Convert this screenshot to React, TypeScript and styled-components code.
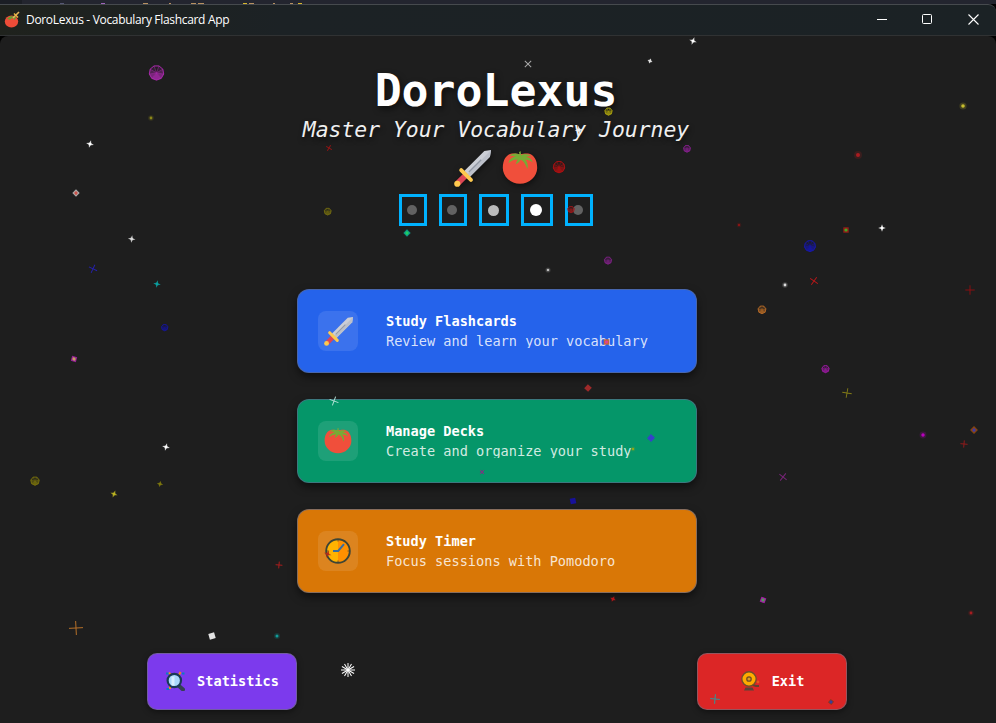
import React from "react";
import styled, { createGlobalStyle } from "styled-components";

const GlobalStyle = createGlobalStyle`
  * { box-sizing: border-box; }
  body { margin: 0; background: #000; overflow: hidden; }
`;

const mono = `"DejaVu Sans Mono", "Liberation Mono", monospace`;

const Desktop = styled.div`
  position: relative;
  width: 996px;
  height: 723px;
  overflow: hidden;
  background: #000;
  display: flex;
  flex-direction: column;
  font-family: ${mono};
`;

const Backdrop = styled.div`
  height: 4px;
  flex: none;
  background: linear-gradient(90deg, #1b1e25 22px, #23252f 22px);
  svg { display: block; }
`;

const TitleBar = styled.header`
  height: 32px;
  flex: none;
  display: flex;
  align-items: center;
  border-top: 1px solid #464a4e;
  border-bottom: 1px solid #303233;
  border-radius: 0 8px 0 0;
  background: linear-gradient(90deg, #1f221d 0, #1c2225 280px, #1b2225 100%);
`;

const AppIcon = styled.div`
  width: 26px;
  height: 30px;
  padding: 6px 0 0 4px;
`;

const WindowTitle = styled.div`
  flex: 1;
  color: #fff;
  font: 12px/30px "Open Sans", "Noto Sans", sans-serif;
  letter-spacing: -0.32px;
`;

const WindowButton = styled.div`
  width: 45.5px;
  height: 30px;
  padding-bottom: 2px;
  display: flex;
  align-items: center;
  justify-content: center;
  &:last-child { width: 46px; }
`;

const Client = styled.main`
  flex: 1;
  display: flex;
  flex-direction: column;
  align-items: center;
  padding-right: 4px;
  background: #1e1e1e;
  border-radius: 8px 8px 0 0;
`;

const Title = styled.h1`
  margin: 30px 0 0;
  height: 48px;
  color: #fff;
  font-size: 44.8px;
  line-height: 50px;
  font-weight: 700;
  text-shadow: 2px 3px 6px rgba(0, 0, 0, 0.55);
`;

const Tagline = styled.p`
  margin: 0;
  height: 32px;
  color: #f0f0f0;
  font-size: 21.4px;
  line-height: 32px;
  font-style: italic;
  text-shadow: 1px 3px 5px rgba(0, 0, 0, 0.55);
`;

const Emblems = styled.div`
  display: flex;
  gap: 11px;
  height: 48px;
  padding-top: 4px;
  filter: drop-shadow(1px 2px 3px rgba(0, 0, 0, 0.5));
`;

const Pager = styled.div`
  display: flex;
  gap: 12px;
  height: 32px;
`;

const PageBox = styled.div<{ $w: number; $inset: number }>`
  width: ${(p) => p.$w}px;
  height: 32px;
  border: 3px solid #00b2ff;
  display: flex;
  align-items: center;
  justify-content: center;
  padding-right: ${(p) => p.$inset}px;
`;

const PageDot = styled.i<{ $size: number; $color: string }>`
  width: ${(p) => p.$size}px;
  height: ${(p) => p.$size}px;
  flex: none;
  border-radius: 50%;
  background: ${(p) => p.$color};
`;

const Menu = styled.nav`
  width: 400px;
  margin: 63px 0 0 2px;
  display: flex;
  flex-direction: column;
  gap: 26px;
`;

const Card = styled.div<{ $color: string }>`
  height: 84px;
  display: flex;
  align-items: center;
  padding: 0 20px;
  border: 1px solid rgba(90, 105, 140, 0.65);
  border-radius: 12px;
  background: ${(p) => p.$color};
  box-shadow: 0 4px 9px rgba(0, 0, 0, 0.5);
`;

const Tile = styled.div`
  width: 40px;
  height: 40px;
  margin-right: 28px;
  border-radius: 8px;
  display: flex;
  align-items: center;
  justify-content: center;
  background: rgba(255, 255, 255, 0.1);
`;

const CardBody = styled.div`
  height: 40px;
`;

const CardTitle = styled.div`
  height: 20px;
  color: #fff;
  font-size: 13.6px;
  line-height: 20px;
  font-weight: 700;
`;

const CardText = styled.div`
  height: 17px;
  overflow: hidden;
  color: rgba(255, 255, 255, 0.83);
  font-size: 13.6px;
  line-height: 20px;
  white-space: nowrap;
`;

const Footer = styled.footer`
  width: 700px;
  margin: 60px 0 0 2px;
  display: flex;
  justify-content: space-between;
`;

const FooterButton = styled.div<{ $color: string }>`
  width: 150px;
  height: 57px;
  padding-bottom: 2px;
  display: flex;
  align-items: center;
  justify-content: center;
  gap: 12px;
  color: #fff;
  font-size: 13.6px;
  font-weight: 700;
  border: 1px solid rgba(110, 110, 125, 0.65);
  border-radius: 10px;
  background: ${(p) => p.$color};
  box-shadow: 0 2px 6px rgba(0, 0, 0, 0.45);
`;

const ParticleLayer = styled.svg`
  position: absolute;
  inset: 0;
  pointer-events: none;
`;

const Sword = ({ size }: { size: number }) => (
  <svg width={size} height={size} viewBox="0 0 36 36">
    <path d="M36 0 35 6.5 15.5 26 10 20.5 29.5 1z" fill="#cbced6" />
    <path d="M36 0 35 6.5 15.5 26 13 23.5z" fill="#bcc0ca" />
    <path d="M14.5 21.5 26.5 9.5" stroke="#9299a6" strokeWidth="1.3" />
    <path d="M9 23 13 27 6 34 2 30z" fill="#dd4655" />
    <path d="m7 19.5 9.5 9.5" stroke="#fdc94f" strokeWidth="3.8" strokeLinecap="round" />
    <circle cx="3.2" cy="32.8" r="3" fill="#ffc94e" />
  </svg>
);

const Tomato = ({ size }: { size: number }) => (
  <svg width={size} height={size} viewBox="0 0 36 36">
    <path d="M10 3.6C4 4.500 .7 10.500 .8 18 .9 26.500 8.500 33.800 18 33.800S35.100 26.500 35.200 18C35.300 10.500 32 4.500 26 3.600c-3-.4-5 .4-8 .4s-5-.8-8-.4z" fill="#f04f3b" />
    <path d="M18.500 1 17 2.200l.6 2.300C14 2.800 9.500 3.400 7.500 6c2.500-.5 4.500-.2 6 .6-3.500.8-6.500 3-7 6.700 2.500-2.600 5.500-3.900 9-3.800l-1.800 4.700c2.800-1.200 4.200-2.600 4.800-4.400 3.500 1.200 4.800 4.700 7 9.200.9-4-.2-7-2.200-9.300 3-.2 5.200.6 7.300 2.900-.3-3.600-3.300-5.400-6.500-5.700 1.500-.8 3.200-.9 5.200-.2-2.600-3-7-3.200-10.200-1.700z" fill="#77ab35" />
  </svg>
);

const Clock = () => (
  <svg width="26" height="26" viewBox="0 0 26 26">
    <circle cx="13" cy="13" r="11.800" fill="#ffb300" />
    <path d="M13 1.200a11.800 11.800 0 0 1 0 23.600z" fill="#ff9000" />
    <circle cx="13" cy="13" r="11.800" fill="none" stroke="#3d4536" strokeWidth="1.900" />
    <path d="M8 13h5.200L19 6.200" fill="none" stroke="#386da0" strokeWidth="2" />
    <path d="M13 2v1.500M13 22.500V24M2 13h1.500M22.500 13H24" stroke="#705529" />
  </svg>
);

const Magnifier = () => (
  <svg width="20" height="20" viewBox="0 0 20 20">
    <path d="M1 2.500h3M1.500 18h3M17 2.500h2.500" stroke="#087fc1" strokeWidth="2.200" />
    <path d="M4 1.500 6 4M15.500 1 14 4M5 18v-3" stroke="#f28a1d" strokeWidth="2" />
    <path d="m14 15 4 3.500" stroke="#344052" strokeWidth="4" strokeLinecap="round" />
    <circle cx="9.300" cy="9.500" r="6.700" fill="#a9d8fb" stroke="#193a56" strokeWidth="2.200" />
    <path d="M6.500 5.500h3v9h-3z" fill="#d7efff" />
  </svg>
);

const Bell = () => (
  <svg width="20" height="20" viewBox="0 0 20 20">
    <path d="M6 14h7l3 1h3" fill="none" stroke="#64402c" strokeWidth="2" />
    <path d="M5.500 16.500h7l1.500 3H4z" fill="#594438" />
    <circle cx="9" cy="8" r="7.200" fill="#ffab00" stroke="#71502b" strokeWidth="1.400" />
    <circle cx="9" cy="8" r="2.200" fill="#d99c25" stroke="#6e4b27" strokeWidth="1.300" />
    <circle cx="18" cy="11" r="1.400" fill="#e75520" />
  </svg>
);

type Kind = "gem" | "star" | "cross" | "dot" | "square" | "burst";
type Particle = [Kind, number, number, number, string, number?, string?];

const particles: Particle[] = [
  ["gem", 156.5, 72.8, 7.3, "#b52bb8"],
  ["dot", 151, 118, 1.4, "#8b8618"],
  ["star", 90, 144, 4, "#fff", 15],
  ["square", 76, 193, 2.6, "#aaa", 45, "#cb5149"],
  ["star", 131.700, 239, 3.800, "#ddd", 8],
  ["cross", 93, 268.800, 4.500, "#2521ad", 25],
  ["star", 157, 284, 3.800, "#0ca0a0", 10],
  ["gem", 164.700, 327.500, 3.300, "#16169b"],
  ["square", 74, 359, 2.600, "#962296", 15, "#c5a060"],
  ["star", 166, 447, 4, "#fff", 15],
  ["gem", 35, 481, 4.300, "#7e760c"],
  ["star", 114, 494, 3.800, "#bcb522", 20],
  ["star", 160, 484, 3.200, "#80790d", 15],
  ["cross", 76, 628, 7, "#b87128", -3],
  ["square", 212, 636, 3, "#e3e3e3", -16],
  ["dot", 277, 636, 1.500, "#109c99"],
  ["cross", 279, 565, 3.400, "#ac1c1c", 5],
  ["burst", 348, 670, 7, "#fff"],
  ["cross", 329, 148, 3.200, "#981414", 30],
  ["gem", 327.700, 211.500, 3.500, "#777010"],
  ["square", 407, 233, 2.600, "#0d9588", 45, "#20d05f"],
  ["cross", 528, 64, 4.500, "#aaa", 45],
  ["star", 693, 41, 4, "#fff", 20],
  ["star", 650, 61, 2.600, "#eee", 20],
  ["gem", 608.500, 111.500, 3.700, "#b4aa0d"],
  ["gem", 687, 148.700, 3.500, "#882090"],
  ["star", 579, 130, 4.500, "#eee", -10],
  ["gem", 559, 167, 5.800, "#b90f11"],
  ["gem", 571, 209.500, 3.300, "#9c181b"],
  ["gem", 608, 260.500, 3.700, "#812288"],
  ["dot", 548, 270, 1.300, "#bbb"],
  ["dot", 963, 106, 1.800, "#c6bd2e"],
  ["dot", 858, 155, 2, "#a91c20"],
  ["dot", 739, 225, 1.200, "#8b1515"],
  ["square", 846, 230, 2.700, "#941d16", 0, "#42a923"],
  ["star", 882, 228, 3.800, "#fff", 0],
  ["gem", 810, 246, 5.600, "#1717b4"],
  ["dot", 785, 285, 1.400, "#ddd"],
  ["cross", 814, 281, 4.700, "#b81719", 35],
  ["gem", 762, 309.700, 4, "#bd6e27"],
  ["cross", 970, 290, 4.700, "#8e1012", 0],
  ["gem", 825.500, 369, 3.700, "#a01aa7"],
  ["cross", 847, 393, 4.800, "#827b17", 10],
  ["dot", 923, 435, 1.700, "#b900bd"],
  ["square", 974, 430, 2.800, "#87440e", 45, "#3d3aa9"],
  ["cross", 964, 444, 3.600, "#92191a", 5],
  ["cross", 783, 477, 4.600, "#792479", 38],
  ["square", 606.500, 342, 2.700, "#c5663a", 0, "#de4193"],
  ["square", 588, 388, 2.700, "#9d2a2a", 43],
  ["cross", 334, 401, 4.700, "#b9e4d9", 20],
  ["square", 651, 438, 2.800, "#3742c9", 43],
  ["dot", 633, 449, 1.200, "#94a516"],
  ["cross", 482, 472, 2.700, "#882c84", 45],
  ["square", 573, 501, 2.800, "#17119a", -12],
  ["star", 327.700, 554, 4, "#b22c1a", 20],
  ["star", 613, 599, 3, "#ba1617", 25],
  ["square", 763, 600, 2.600, "#a51ba5", 20, "#509d5a"],
  ["dot", 971, 613, 1.400, "#a61c20"],
  ["cross", 715, 699, 4.800, "#2b999b", 5],
  ["square", 831, 702, 2.200, "#943515", 40, "#3d3d9b"],
];

const polygon = (r: number) => {
  const sides = r > 5 ? 9 : 7;
  return Array.from({ length: sides }, (_, i) => {
    const a = (i * Math.PI * 2) / sides + Math.PI / 2;
    return [Math.cos(a) * r, Math.sin(a) * r];
  });
};

const Gem = ({ r, color }: { r: number; color: string }) => {
  const points = polygon(r);
  return (
    <>
      {points.map(([x, y], i) => {
        const [nx, ny] = points[(i + 1) % points.length];
        const depth = (y + ny) / (2 * r);
        return (
          <path
            key={i}
            d={`M0 0L${x} ${y}L${nx} ${ny}z`}
            fill={color}
            fillOpacity={0.42 + depth * 0.4}
            stroke={color}
            strokeWidth={0.4}
            strokeOpacity={0.6}
          />
        );
      })}
      <polygon points={points.join(" ")} fill="none" stroke={color} strokeWidth={0.9} strokeOpacity={0.9} />
    </>
  );
};

const ParticleShape = ({ p: [kind, x, y, r, color, rot = 0, core] }: { p: Particle }) => (
  <g transform={`translate(${x} ${y}) rotate(${rot})`}>
    {kind === "gem" && <Gem r={r} color={color} />}
    {kind === "star" && (
      <>
        <path d={`M0 ${-r} L1 -1 L${r} 0 L1 1 L0 ${r} L-1 1 L${-r} 0 L-1 -1z`} fill={color} fillOpacity={0.85} />
        <circle r={r * 0.32} fill={color} />
      </>
    )}
    {kind === "cross" && <path d={`M${-r} 0H${r}M0 ${-r}V${r}`} stroke={color} strokeWidth={0.95} />}
    {kind === "dot" && (
      <>
        <circle r={r * 2} fill={color} fillOpacity={0.2} />
        <circle r={r} fill={color} />
      </>
    )}
    {kind === "square" && (
      <>
        <rect x={-r} y={-r} width={r * 2} height={r * 2} fill={color} />
        {core && <circle r={1.6} fill={core} />}
      </>
    )}
    {kind === "burst" &&
      [0, 30, 60, 90, 120, 150].map((a) => (
        <path key={a} d={`M${-r} 0H${r}`} stroke={color} strokeWidth={1} transform={`rotate(${a})`} />
      ))}
  </g>
);

const pages = [
  { width: 28, inset: 2, dot: 10, color: "#626262" },
  { width: 28, inset: 2, dot: 10, color: "#626262" },
  { width: 30, inset: 1, dot: 11, color: "#bbb" },
  { width: 32, inset: 2, dot: 12, color: "#fff" },
  { width: 28, inset: 2, dot: 10, color: "#626262" },
];

const cards = [
  { title: "Study Flashcards", text: "Review and learn your vocabulary", color: "#2563eb", icon: <Sword size={29} /> },
  { title: "Manage Decks", text: "Create and organize your study", color: "#059669", icon: <Tomato size={28} /> },
  { title: "Study Timer", text: "Focus sessions with Pomodoro", color: "#d97706", icon: <Clock /> },
];

const codeMarks: [number, number, string][] = [
  [60, 4, "#555774"], [101, 4, "#9d63b8"], [143, 5, "#b79060"], [169, 2, "#b79060"],
  [191, 5, "#b79060"], [198, 6, "#b79060"], [243, 4, "#d6b62c"], [249, 5, "#b79060"],
  [273, 2, "#b79060"], [290, 3, "#b79060"], [298, 4, "#d6b62c"],
];

export default function App() {
  return (
    <Desktop>
      <GlobalStyle />
      <Backdrop>
        <svg width="996" height="4">
          {codeMarks.map(([x, w, c]) => (
            <rect key={x} x={x} y="3" width={w} height="1" fill={c} />
          ))}
        </svg>
      </Backdrop>
      <TitleBar>
        <AppIcon>
          <svg width="17" height="17" viewBox="0 0 17 17">
            <ellipse cx="7.500" cy="10.500" rx="6.700" ry="6" fill="#ed4c38" />
            <path d="M3 7.500 7 5l5 1-1 3-3-2-2 2z" fill="#6a9c32" />
            <path d="m9 7 6-6" stroke="#e4b45b" strokeWidth="1.600" />
            <path d="m10 2.500 4 4" stroke="#f1b642" strokeWidth="1.500" />
          </svg>
        </AppIcon>
        <WindowTitle>DoroLexus - Vocabulary Flashcard App</WindowTitle>
        <WindowButton>
          <svg width="10" height="10"><path d="M0 5.500h10" stroke="#fff" /></svg>
        </WindowButton>
        <WindowButton>
          <svg width="10" height="10"><rect x=".5" y=".5" width="9" height="9" rx="1" fill="none" stroke="#fff" /></svg>
        </WindowButton>
        <WindowButton>
          <svg width="11" height="11"><path d="m.5.5 10 10m0-10-10 10" stroke="#fff" strokeWidth="1.100" /></svg>
        </WindowButton>
      </TitleBar>
      <Client>
        <Title>DoroLexus</Title>
        <Tagline>Master Your Vocabulary Journey</Tagline>
        <Emblems>
          <Sword size={37} />
          <Tomato size={36} />
        </Emblems>
        <Pager>
          {pages.map((page, i) => (
            <PageBox key={i} $w={page.width} $inset={page.inset}>
              <PageDot $size={page.dot} $color={page.color} />
            </PageBox>
          ))}
        </Pager>
        <Menu>
          {cards.map((c) => (
            <Card key={c.title} $color={c.color}>
              <Tile>{c.icon}</Tile>
              <CardBody>
                <CardTitle>{c.title}</CardTitle>
                <CardText>{c.text}</CardText>
              </CardBody>
            </Card>
          ))}
        </Menu>
        <Footer>
          <FooterButton $color="#7c3aed"><Magnifier />Statistics</FooterButton>
          <FooterButton $color="#dc2626"><Bell />Exit</FooterButton>
        </Footer>
      </Client>
      <ParticleLayer width="996" height="723">
        {particles.map((p, i) => (
          <ParticleShape key={i} p={p} />
        ))}
      </ParticleLayer>
    </Desktop>
  );
}
